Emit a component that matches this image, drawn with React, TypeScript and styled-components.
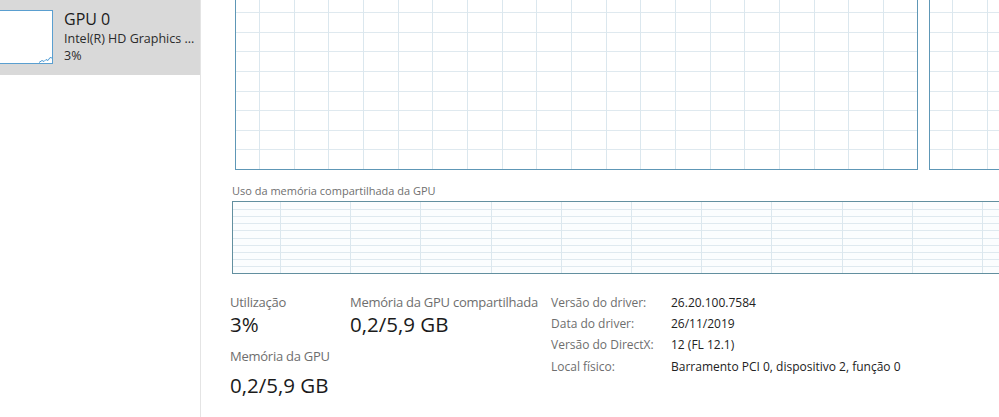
import React from "react";
import styled, { createGlobalStyle } from "styled-components";

const GlobalStyle = createGlobalStyle`
  html, body { margin: 0; padding: 0; background: #ffffff; }
  body { font-family: "Open Sans", "Noto Sans", "Liberation Sans", sans-serif; }
  * { box-sizing: border-box; }
`;

const Window = styled.div`
  display: flex;
  width: 999px;
  height: 417px;
  overflow: hidden;
  background: #ffffff;
`;

const Sidebar = styled.aside`
  flex: none;
  width: 201px;
  border-right: 1px solid #e4e4e4;
  overflow: hidden;
`;

const DeviceItem = styled.div<{ $selected?: boolean }>`
  display: flex;
  align-items: flex-start;
  gap: 11px;
  height: 75px;
  padding-top: 10px;
  background: ${(p) => (p.$selected ? "#d9d9d9" : "transparent")};
`;

const Thumb = styled.div`
  flex: none;
  display: flex;
  align-items: flex-end;
  justify-content: flex-end;
  width: 71px;
  height: 54px;
  margin-left: -18px;
  border: 1px solid #5a9fd0;
  background: #ffffff;
`;

const DeviceText = styled.div`
  display: flex;
  flex-direction: column;
  min-width: 0;
`;

const DeviceName = styled.div`
  font-size: 16px;
  line-height: 19px;
  color: #1b1b1b;
  margin-bottom: 2px;
`;

const DeviceSub = styled.div`
  font-size: 12.5px;
  line-height: 16.5px;
  color: #2b2b2b;
  white-space: nowrap;
  overflow: hidden;
`;

const Main = styled.main`
  flex: 1;
  min-width: 0;
  display: flex;
  flex-direction: column;
  padding-left: 31px;
  overflow: hidden;
`;

const ChartRow = styled.div`
  display: flex;
  gap: 11px;
  margin-top: -28px;
  padding-left: 3px;
`;

const Chart = styled.div<{ $w: number; $h: number; $border?: string; $bg?: string }>`
  flex: none;
  width: ${(p) => p.$w}px;
  height: ${(p) => p.$h}px;
  border: 1px solid ${(p) => p.$border ?? "#5e97b6"};
  background: ${(p) => p.$bg ?? "#ffffff"};
  overflow: hidden;
  display: flex;
`;

const SectionLabel = styled.div`
  margin-top: 13px;
  font-size: 11px;
  line-height: 15px;
  color: #6f6f6f;
`;

const SharedWrap = styled.div`
  margin-top: 3px;
  align-self: flex-start;
`;

const Stats = styled.div`
  display: flex;
  align-items: flex-start;
  margin-top: 17px;
  margin-left: -2px;
`;

const StatGrid = styled.div`
  display: grid;
  grid-template-columns: 120px 200px;
  row-gap: 13px;
  padding-top: 3px;
`;

const StatBlock = styled.div`
  display: flex;
  flex-direction: column;
`;

const StatLabel = styled.div`
  font-size: 13px;
  line-height: 17px;
  letter-spacing: -0.25px;
  color: #6e6e6e;
  white-space: nowrap;
`;

const StatValue = styled.div<{ $offset?: number }>`
  margin-top: ${(p) => p.$offset ?? 2}px;
  font-size: 20.5px;
  line-height: 22px;
  color: #1b1b1b;
  white-space: nowrap;
`;

const InfoTable = styled.div`
  display: grid;
  grid-template-columns: 120px auto;
  grid-auto-rows: 21.3px;
  align-items: center;
  font-size: 12px;
  line-height: 16px;
  padding-left: 1px;
  padding-top: 1px;
`;

const InfoKey = styled.div`
  color: #6e6e6e;
  white-space: nowrap;
`;

const InfoVal = styled.div`
  color: #222222;
  white-space: nowrap;
`;

type GridProps = {
  w: number;
  h: number;
  x0: number;
  dx: number;
  dy: number;
  fromBottom?: boolean;
};

function Grid({ w, h, x0, dx, dy, fromBottom }: GridProps) {
  const xs: number[] = [];
  for (let x = x0; x < w; x += dx) xs.push(Math.round(x) + 0.5);
  const ys: number[] = [];
  if (fromBottom) {
    for (let y = h - dy; y > 0; y -= dy) ys.push(Math.round(y) + 0.5);
  } else {
    for (let y = dy; y < h; y += dy) ys.push(Math.round(y) + 0.5);
  }
  return (
    <svg width={w} height={h} viewBox={`0 0 ${w} ${h}`} shapeRendering="crispEdges">
      {ys.map((y) => (
        <line key={"y" + y} x1={0} x2={w} y1={y} y2={y} stroke="#dfe9ef" strokeWidth={1} />
      ))}
      {xs.map((x) => (
        <line key={"x" + x} x1={x} x2={x} y1={0} y2={h} stroke="#dbe7ee" strokeWidth={1} />
      ))}
    </svg>
  );
}

function ThumbGraph() {
  return (
    <svg width="14" height="8" viewBox="0 0 14 8">
      <polyline
        points="1,7.5 4,5.5 6,6.5 8,4.5 10,5.5 12,2.5 14,3"
        fill="none"
        stroke="#4b9ad3"
        strokeWidth="1"
      />
    </svg>
  );
}

const info: [string, string][] = [
  ["Versão do driver:", "26.20.100.7584"],
  ["Data do driver:", "26/11/2019"],
  ["Versão do DirectX:", "12 (FL 12.1)"],
  ["Local físico:", "Barramento PCI 0, dispositivo 2, função 0"],
];

export default function App() {
  return (
    <>
      <GlobalStyle />
      <Window>
        <Sidebar>
          <DeviceItem $selected>
            <Thumb>
              <ThumbGraph />
            </Thumb>
            <DeviceText>
              <DeviceName>GPU 0</DeviceName>
              <DeviceSub>Intel(R) HD Graphics ...</DeviceSub>
              <DeviceSub>3%</DeviceSub>
            </DeviceText>
          </DeviceItem>
        </Sidebar>
        <Main>
          <ChartRow>
            <Chart $w={683} $h={198}>
              <Grid w={681} h={196} x0={23} dx={34.67} dy={19.6} fromBottom />
            </Chart>
            <Chart $w={683} $h={198}>
              <Grid w={681} h={196} x0={22} dx={34.67} dy={19.6} fromBottom />
            </Chart>
          </ChartRow>
          <SectionLabel>Uso da memória compartilhada da GPU</SectionLabel>
          <SharedWrap>
            <Chart $w={1400} $h={73} $border="#628f9f" $bg="#fbfdfe">
              <Grid w={1398} h={71} x0={47} dx={70.2} dy={7.1} />
            </Chart>
          </SharedWrap>
          <Stats>
            <StatGrid>
              <StatBlock>
                <StatLabel>Utilização</StatLabel>
                <StatValue>3%</StatValue>
              </StatBlock>
              <StatBlock>
                <StatLabel>Memória da GPU compartilhada</StatLabel>
                <StatValue>0,2/5,9 GB</StatValue>
              </StatBlock>
              <StatBlock>
                <StatLabel>Memória da GPU</StatLabel>
                <StatValue $offset={9}>0,2/5,9 GB</StatValue>
              </StatBlock>
            </StatGrid>
            <InfoTable>
              {info.map(([k, v]) => (
                <React.Fragment key={k}>
                  <InfoKey>{k}</InfoKey>
                  <InfoVal>{v}</InfoVal>
                </React.Fragment>
              ))}
            </InfoTable>
          </Stats>
        </Main>
      </Window>
    </>
  );
}
